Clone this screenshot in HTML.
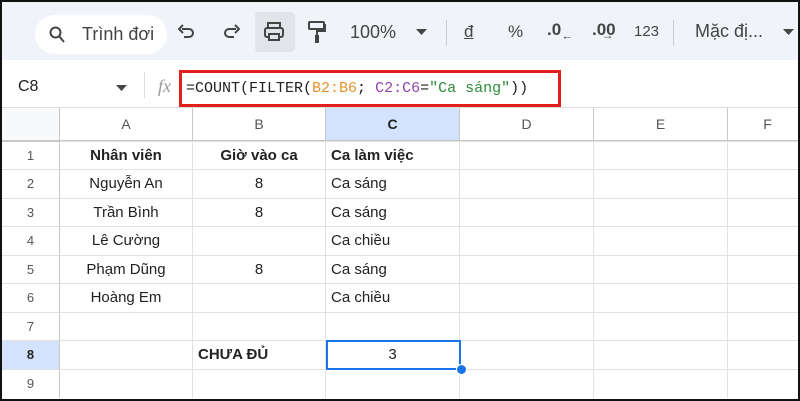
<!DOCTYPE html>
<html><head><meta charset="utf-8"><style>
*{box-sizing:border-box;margin:0;padding:0}
body{width:800px;height:401px;overflow:hidden;background:#fff;font-family:"Liberation Sans",Arial,sans-serif;position:relative}
.frame{position:absolute;left:0;top:0;width:800px;height:401px;border:2px solid #111;z-index:10}
.tb{position:absolute;left:2px;top:2px;width:796px;height:58px;background:#f0f4f9}
.pill{position:absolute;left:33px;top:13px;width:132px;height:39px;background:#fff;border-radius:20px;font-size:18px;color:#444}
.t{position:absolute;color:#444;font-size:17px}
.fb{position:absolute;left:2px;top:60px;width:796px;height:48px;background:#fff;border-bottom:1px solid #ddd}
.red{position:absolute;left:179px;top:70px;width:382px;height:37px;border:3px solid #e0201a;font-family:"Liberation Mono",monospace;font-size:15px;padding:7px 4px;color:#222;white-space:nowrap}
.r{position:absolute;left:2px;width:800px;height:29px}
.c{position:absolute;top:0;height:29px;border-right:1px solid #e1e1e1;border-top:1px solid #e1e1e1;font-size:15px;color:#222;line-height:28px;white-space:nowrap}
.n{left:0;width:58px;text-align:center;color:#555;font-size:13px;border-right-color:#c7c7c7;background:#fff}
.a{left:58px;width:133px;text-align:center}
.b{left:191px;width:133px;text-align:center}
.cc{left:324px;width:134px;padding-left:5px}
.d{left:458px;width:134px}
.e{left:592px;width:134px}
.f{left:726px;width:80px}
.h{top:108px;height:33px;line-height:33px;text-align:center;color:#555;font-size:14px;border-right:1px solid #c7c7c7;border-bottom:1px solid #c7c7c7;position:absolute}
</style></head><body>
<div class="tb">
 <div class="pill"><svg style="position:absolute;left:14px;top:11px" width="16" height="17" viewBox="0 0 16 17"><circle cx="6.5" cy="6.5" r="5" fill="none" stroke="#444" stroke-width="2"/><path d="M10 10l5 6" stroke="#444" stroke-width="2"/></svg><span style="position:absolute;left:47px;top:9px">Trình đơi</span></div>
 <svg style="position:absolute;left:176px;top:22px" width="18" height="16"><path d="M4 5h7a4 4 0 010 8H6" fill="none" stroke="#444" stroke-width="2"/><path d="M5 1L1 5l4 4" fill="none" stroke="#444" stroke-width="2"/></svg>
 <svg style="position:absolute;left:220px;top:22px" width="18" height="16"><path d="M14 5H7a4 4 0 000 8h5" fill="none" stroke="#444" stroke-width="2"/><path d="M13 1l4 4-4 4" fill="none" stroke="#444" stroke-width="2"/></svg>
 <div style="position:absolute;left:253px;top:10px;width:40px;height:40px;background:#e1e5ea;border-radius:4px"></div>
 <svg style="position:absolute;left:261px;top:19px" width="22" height="22"><rect x="5" y="2" width="12" height="5" fill="none" stroke="#444" stroke-width="2"/><rect x="2" y="7" width="18" height="9" rx="2" fill="none" stroke="#444" stroke-width="2"/><rect x="6" y="13" width="10" height="6" fill="#e1e5ea" stroke="#444" stroke-width="2"/></svg>
 <svg style="position:absolute;left:305px;top:18px" width="20" height="24"><rect x="2" y="2" width="15" height="7" rx="1" fill="none" stroke="#444" stroke-width="2"/><path d="M17 5h1v6H10v4" fill="none" stroke="#444" stroke-width="2"/><rect x="8" y="15" width="4" height="8" fill="#444"/></svg>
 <span class="t" style="left:348px;top:20px;font-size:18px">100%</span>
 <svg style="position:absolute;left:414px;top:27px" width="12" height="7"><path d="M0 0h11L5.5 6z" fill="#444"/></svg>
 <div style="position:absolute;left:444px;top:18px;width:1px;height:26px;background:#ccc"></div>
 <span class="t" style="left:462px;top:20px;text-decoration:underline">đ</span>
 <span class="t" style="left:506px;top:20px">%</span>
 <span class="t" style="left:545px;top:18px;font-weight:bold">.0<sub style="font-size:12px">←</sub></span>
 <span class="t" style="left:590px;top:18px;font-weight:bold">.00<sub style="font-size:12px;margin-left:-14px">→</sub></span>
 <span class="t" style="left:632px;top:21px;font-size:15px">123</span>
 <div style="position:absolute;left:671px;top:18px;width:1px;height:26px;background:#ccc"></div>
 <span class="t" style="left:693px;top:19px;font-size:18px">Mặc đị...</span>
 <svg style="position:absolute;left:781px;top:27px" width="12" height="7"><path d="M0 0h11L5.5 6z" fill="#444"/></svg>
</div>
<div class="fb">
 <span style="position:absolute;left:16px;top:18px;font-size:16px;color:#222">C8</span>
 <svg style="position:absolute;left:114px;top:25px" width="12" height="7"><path d="M0 0h11L5.5 6z" fill="#444"/></svg>
 <div style="position:absolute;left:142px;top:12px;width:1px;height:26px;background:#ddd"></div>
 <span style="position:absolute;left:156px;top:16px;font-family:'Liberation Serif',serif;font-style:italic;color:#999;font-size:18px">fx</span>
</div>
<div class="red">=COUNT(FILTER(<span style="color:#e8912d">B2:B6</span>; <span style="color:#8e44ad">C2:C6</span>=<span style="color:#2e8b3a">"Ca sáng"</span>))</div>

<div class="h" style="left:2px;width:58px;background:#f8f9fa"></div>
<div class="h" style="left:60px;width:133px">A</div>
<div class="h" style="left:193px;width:133px">B</div>
<div class="h" style="left:326px;width:134px;background:#d3e3fd;color:#222;font-weight:bold">C</div>
<div class="h" style="left:460px;width:134px">D</div>
<div class="h" style="left:594px;width:134px">E</div>
<div class="h" style="left:728px;width:80px">F</div>

<div class="r" style="top:141px"><div class="c n" style="border-top-color:#c7c7c7">1</div><div class="c a" style="font-weight:bold">Nhân viên</div><div class="c b" style="font-weight:bold">Giờ vào ca</div><div class="c cc" style="font-weight:bold">Ca làm việc</div><div class="c d"></div><div class="c e"></div><div class="c f"></div></div>
<div class="r" style="top:169px"><div class="c n">2</div><div class="c a">Nguyễn An</div><div class="c b">8</div><div class="c cc">Ca sáng</div><div class="c d"></div><div class="c e"></div><div class="c f"></div></div>
<div class="r" style="top:198px"><div class="c n">3</div><div class="c a">Trần Bình</div><div class="c b">8</div><div class="c cc">Ca sáng</div><div class="c d"></div><div class="c e"></div><div class="c f"></div></div>
<div class="r" style="top:226px"><div class="c n">4</div><div class="c a">Lê Cường</div><div class="c b"></div><div class="c cc">Ca chiều</div><div class="c d"></div><div class="c e"></div><div class="c f"></div></div>
<div class="r" style="top:255px"><div class="c n">5</div><div class="c a">Phạm Dũng</div><div class="c b">8</div><div class="c cc">Ca sáng</div><div class="c d"></div><div class="c e"></div><div class="c f"></div></div>
<div class="r" style="top:283px"><div class="c n">6</div><div class="c a">Hoàng Em</div><div class="c b"></div><div class="c cc">Ca chiều</div><div class="c d"></div><div class="c e"></div><div class="c f"></div></div>
<div class="r" style="top:312px"><div class="c n">7</div><div class="c a"></div><div class="c b"></div><div class="c cc"></div><div class="c d"></div><div class="c e"></div><div class="c f"></div></div>
<div class="r" style="top:340px"><div class="c n" style="background:#d3e3fd;color:#222;font-weight:bold">8</div><div class="c a"></div><div class="c b" style="text-align:left;padding-left:5px;font-weight:bold">CHƯA ĐỦ</div><div class="c cc" style="text-align:center;padding:0">3</div><div class="c d"></div><div class="c e"></div><div class="c f"></div></div>
<div class="r" style="top:369px"><div class="c n">9</div><div class="c a"></div><div class="c b"></div><div class="c cc"></div><div class="c d"></div><div class="c e"></div><div class="c f"></div></div>

<div style="position:absolute;left:326px;top:340px;width:135px;height:30px;border:2px solid #1a73e8"></div>
<div style="position:absolute;left:456px;top:364px;width:11px;height:11px;border-radius:50%;background:#1a73e8;border:1px solid #fff"></div>
<div class="frame" style="background:transparent"></div>
</body></html>
